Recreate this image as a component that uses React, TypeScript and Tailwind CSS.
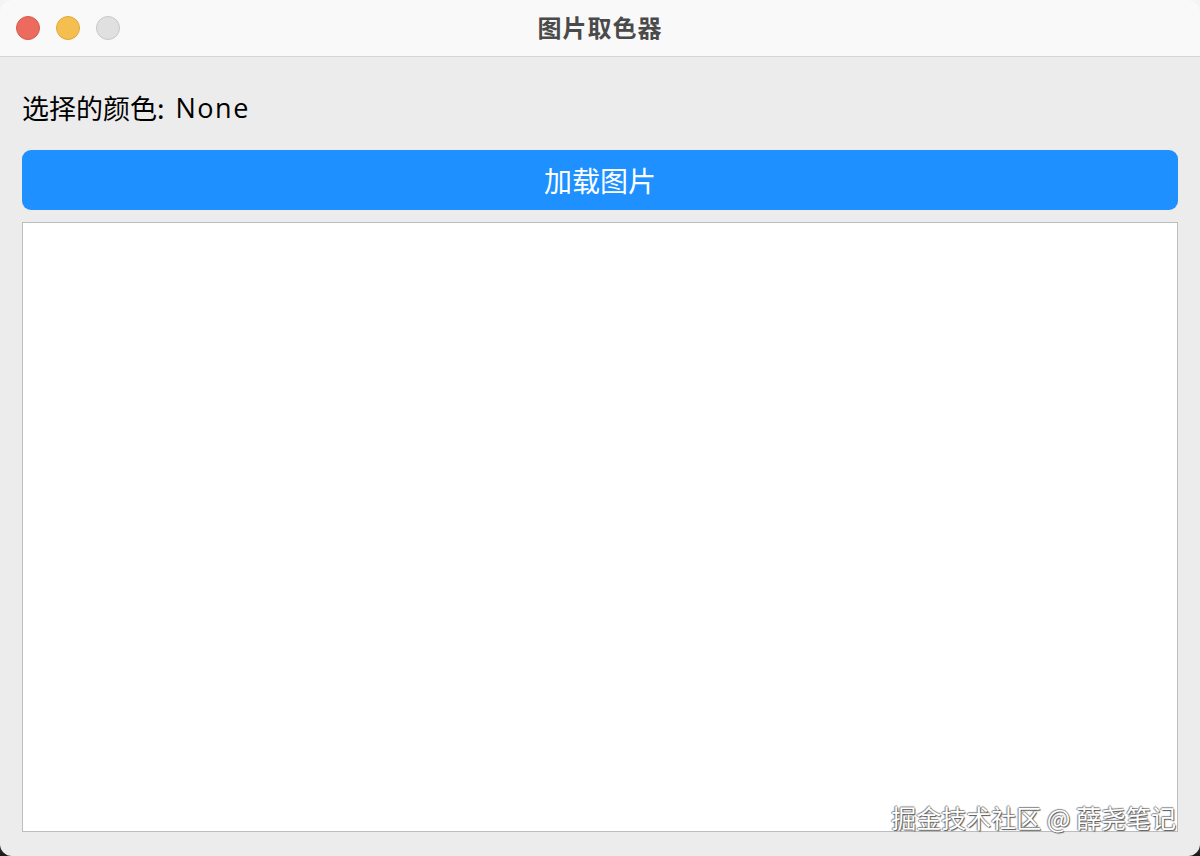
export default function App() {
  return (
    <div className="w-[1200px] h-[856px] bg-gradient-to-b from-[#f4f4f4] via-[#f4f4f4] via-90% to-[#1a1a1a]">
      <div
        className="relative w-full h-full rounded-[12px] overflow-hidden bg-[#ececec] flex flex-col"
        style={{ fontFamily: '"Noto Sans CJK SC", "Noto Sans", sans-serif' }}
      >
        {/* title bar */}
        <div className="relative h-[57px] shrink-0 bg-[#f9f9f9] border-b border-[#d6d6d6] flex items-center justify-center">
          <div className="absolute left-[16px] top-[16px] flex gap-[16px]">
            <span className="w-[24px] h-[24px] rounded-full bg-[#ec6a5e] border border-[#d65a4f]" />
            <span className="w-[24px] h-[24px] rounded-full bg-[#f5bf4f] border border-[#dea93e]" />
            <span className="w-[24px] h-[24px] rounded-full bg-[#e0e0e0] border border-[#c8c8c8]" />
          </div>
          <span className="text-[24px] leading-none font-bold text-[#4a4a4a] tracking-[1px] -mt-[3px]">图片取色器</span>
        </div>

        {/* body */}
        <div className="flex-1 flex flex-col px-[22px] pb-[24px]">
          <div className="h-[93px] flex items-center pt-[7px] text-[27px] text-black leading-none">
            <span>选择的颜色:</span>
            <span className="ml-[11px] tracking-[1.5px]" style={{ fontFamily: '"Open Sans", sans-serif' }}>None</span>
          </div>
          <button className="h-[60px] w-full rounded-[9px] bg-[#1e90ff] text-white text-[28px] leading-none flex items-center justify-center">
            加载图片
          </button>
          <div className="mt-[12px] flex-1 bg-white border border-[#bdbdbd]" />
        </div>

        <div
          className="absolute right-[24px] bottom-[26px] text-[25px] leading-none text-white"
          style={{ textShadow: '1px 1px 1px #555, -1px 0 1px #888, 0 -1px 1px #888' }}
        >
          掘金技术社区 @ 薛尧笔记
        </div>
      </div>
    </div>
  );
}
